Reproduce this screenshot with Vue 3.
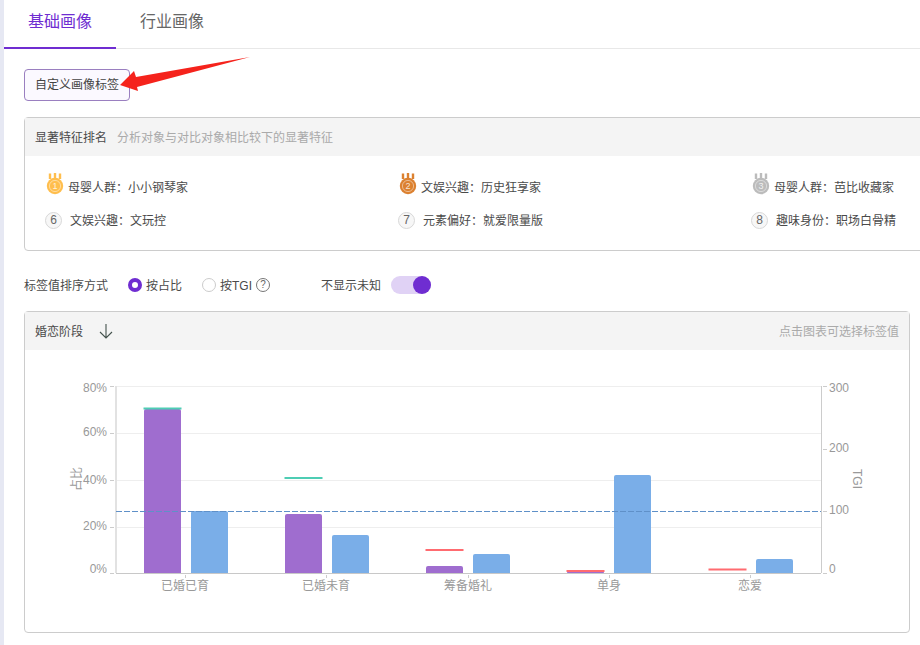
<template>
  <div class="page">
    <div class="tabs">
      <div class="tab active">基础画像</div>
      <div class="tab">行业画像</div>
    </div>

    <div class="content">
      <button class="custom-btn">自定义画像标签</button>

      <section class="card rank-card">
        <header class="card-head">
          <span class="head-title">显著特征排名</span>
          <span class="head-sub">分析对象与对比对象相比较下的显著特征</span>
        </header>
        <div class="rank-grid">
          <div v-for="item in rankItems" :key="item.rank" class="rank-item">
            <svg v-if="item.rank < 4" class="medal" width="18" height="23" viewBox="0 0 18 23">
              <path d="M4 7V1.5M9 7V1M14 7V1.5" :stroke="item.color" stroke-width="2.4" fill="none" />
              <circle cx="9" cy="14" r="8.2" :fill="item.color" />
              <circle cx="9" cy="14" r="5.6" fill="none" stroke="#ffffff" stroke-opacity="0.45" stroke-width="1" />
              <text x="9" y="17.4" text-anchor="middle" class="medal-num">{{ item.rank }}</text>
            </svg>
            <span v-else class="rank-num">{{ item.rank }}</span>
            <span class="rank-text">{{ item.text }}</span>
          </div>
        </div>
      </section>

      <div class="controls">
        <span class="ctl-label ctl-text">标签值排序方式</span>
        <span class="radio checked"></span>
        <span class="ctl-text">按占比</span>
        <span class="radio second"></span>
        <span class="ctl-text">按TGI</span>
        <span class="help">?</span>
        <span class="toggle-label ctl-text">不显示未知</span>
        <span class="toggle"><span class="knob"></span></span>
      </div>

      <section class="card chart-card">
        <header class="card-head">
          <span class="head-title">婚恋阶段</span>
          <svg class="sort-icon" width="14" height="16" viewBox="0 0 14 16">
            <path d="M7 1V15M1 9L7 15L13 9" fill="none" stroke="#44524d" stroke-width="1.1" />
          </svg>
          <span class="head-hint">点击图表可选择标签值</span>
        </header>
        <!-- viewBox uses page coordinates so chart numbers can be read off the screenshot -->
        <svg class="chart" width="884" height="282" viewBox="25 350 884 282">
          <line v-for="y in gridLines" :key="y" x1="116" x2="821" :y1="y" :y2="y" stroke="#eeeeee" />

          <line x1="116" x2="116" y1="386" y2="573" stroke="#e2e2e2" stroke-width="2" />
          <line x1="821.5" x2="821.5" y1="386" y2="573" stroke="#cccccc" />

          <g v-for="t in leftTicks" :key="t.label">
            <line x1="110" x2="114" :y1="t.tick" :y2="t.tick" stroke="#cccccc" />
            <text x="107" :y="t.y" text-anchor="end" class="axis-text">{{ t.label }}</text>
          </g>
          <g v-for="t in rightTicks" :key="t.label">
            <line x1="823" x2="827" :y1="t.tick" :y2="t.tick" stroke="#cccccc" />
            <text x="829" :y="t.y" class="axis-text">{{ t.label }}</text>
          </g>

          <text class="axis-title" transform="translate(81 479) rotate(-90)" text-anchor="middle">占比</text>
          <text class="axis-title" transform="translate(853 479) rotate(90)" text-anchor="middle">TGI</text>

          <g v-for="g in groups" :key="g.label">
            <path :d="barPath(g.x, g.purple)" fill="#9f6dcf" />
            <path :d="barPath(g.x + 47, g.blue)" fill="#7aaee8" />
            <rect :x="g.x - 0.5" :y="g.mark - 1" width="38" height="2" :fill="g.markColor" />
            <line :x1="g.cx + 0.5" :x2="g.cx + 0.5" y1="575" y2="578" stroke="#cccccc" />
            <text :x="g.cx" y="590" text-anchor="middle" class="x-text">{{ g.label }}</text>
          </g>

          <line x1="116" x2="821" y1="573.5" y2="573.5" stroke="#c8c8c8" />
          <line x1="116" x2="821" y1="511.5" y2="511.5" stroke="#5f90c8" stroke-dasharray="6 2" />
        </svg>
      </section>
    </div>

    <svg class="arrow" width="140" height="50" viewBox="115 50 140 50">
      <polygon points="250,57 136,77 134,71 120,85 138,91 137,87" fill="#f5231c" />
    </svg>
  </div>
</template>

<script setup>
const rankItems = [
  { rank: 1, text: "母婴人群：小小钢琴家", color: "#ffbe4d" },
  { rank: 2, text: "文娱兴趣：历史狂享家", color: "#dc8130" },
  { rank: 3, text: "母婴人群：芭比收藏家", color: "#bcbcbc" },
  { rank: 6, text: "文娱兴趣：文玩控" },
  { rank: 7, text: "元素偏好：就爱限量版" },
  { rank: 8, text: "趣味身份：职场白骨精" },
];

const gridLines = [386.5, 433.5, 480.5, 527.5];

const leftTicks = [
  { label: "80%", y: 392, tick: 386.5 },
  { label: "60%", y: 436, tick: 433.5 },
  { label: "40%", y: 484, tick: 480.5 },
  { label: "20%", y: 530, tick: 527.5 },
  { label: "0%", y: 573, tick: 573.5 },
];

const rightTicks = [
  { label: "300", y: 392, tick: 386.5 },
  { label: "200", y: 452, tick: 449.5 },
  { label: "100", y: 514, tick: 511.5 },
  { label: "0", y: 573, tick: 573.5 },
];

const teal = "#4ecdb4";
const red = "#ff6b70";

const groups = [
  { label: "已婚已育", x: 144, cx: 185, purple: 409, blue: 511, mark: 408.5, markColor: teal },
  { label: "已婚未育", x: 285, cx: 326, purple: 514, blue: 535, mark: 478, markColor: teal },
  { label: "筹备婚礼", x: 426, cx: 468, purple: 566, blue: 554, mark: 550, markColor: red },
  { label: "单身", x: 567, cx: 609, purple: 571, blue: 475, mark: 571, markColor: red },
  { label: "恋爱", x: 709, cx: 750, purple: 573, blue: 559, mark: 569.5, markColor: red },
];

// bar with slightly rounded top corners, standing on the x axis
function barPath(x, top) {
  const w = 37;
  const r = Math.min(2, 573 - top);
  return `M${x} 573V${top + r}Q${x} ${top} ${x + r} ${top}H${x + w - r}Q${x + w} ${top} ${x + w} ${top + r}V573Z`;
}
</script>

<style scoped>
.page {
  position: relative;
  width: 920px;
  height: 645px;
  box-sizing: border-box;
  border-left: 4px solid #e6e8f3;
  overflow: hidden;
  background: #fff;
  font-family: "Liberation Sans", "Noto Sans CJK SC", sans-serif;
  color: #555;
}

.tabs {
  display: flex;
  height: 49px;
  box-sizing: border-box;
  border-bottom: 1px solid #e8e8e8;
}

.tab {
  height: 49px;
  box-sizing: border-box;
  padding: 0 24px;
  line-height: 43px;
  font-size: 16px;
  color: #666;
}

.tab.active {
  color: #6f2dd1;
  border-bottom: 2px solid #6f2dd1;
}

.content {
  padding-left: 20px;
}

.custom-btn {
  display: block;
  width: 106px;
  height: 32px;
  margin-top: 20px;
  padding: 0 0 3px;
  box-sizing: border-box;
  border: 1px solid #9a7fc0;
  border-radius: 4px;
  background: #fbf9ff;
  font-family: inherit;
  font-size: 12px;
  color: #444;
}

.card {
  box-sizing: border-box;
  border: 1px solid #cccccc;
  border-radius: 4px;
  margin-top: 16px;
}

.rank-card {
  width: 1000px;
  height: 134px;
}

.card-head {
  display: flex;
  align-items: center;
  box-sizing: border-box;
  height: 38px;
  padding: 0 10px 2px;
  background: #f4f4f4;
  font-size: 12px;
}

.head-title {
  color: #4a4a4a;
}

.head-sub {
  margin-left: 10px;
  color: #aaa;
}

.rank-grid {
  display: grid;
  grid-template-columns: repeat(3, 353px);
  row-gap: 13px;
  padding: 21px 0 0 20px;
}

.rank-item {
  display: flex;
  align-items: center;
  height: 20px;
  font-size: 12px;
  color: #4a4a4a;
}

.rank-text {
  margin-top: -2px;
}

.medal {
  margin: -7px 4px 0 1px;
  flex: none;
}

.medal-num {
  font-size: 9px;
  fill: #fff;
  fill-opacity: 0.8;
}

.rank-num {
  flex: none;
  box-sizing: border-box;
  width: 17px;
  height: 17px;
  margin-right: 8px;
  border: 1px solid #d8d8d8;
  border-radius: 50%;
  background: #f7f7f7;
  text-align: center;
  line-height: 15px;
  font-size: 12px;
  color: #666;
}

.controls {
  display: flex;
  align-items: center;
  height: 20px;
  margin-top: 24px;
  font-size: 12px;
  color: #4a4a4a;
}

.ctl-text {
  margin-top: -2px;
}

.ctl-label {
  width: 84px;
  margin-right: 20px;
}

.radio {
  box-sizing: border-box;
  width: 14px;
  height: 14px;
  margin-right: 4px;
  border: 1px solid #ccc;
  border-radius: 50%;
}

.radio.checked {
  border: 4px solid #6f2dd1;
}

.radio.second {
  margin-left: 20px;
}

.help {
  box-sizing: border-box;
  width: 14px;
  height: 14px;
  margin-left: 4px;
  border: 1px solid #777;
  border-radius: 50%;
  text-align: center;
  line-height: 12px;
  font-size: 10px;
  color: #666;
}

.toggle-label {
  margin-left: 51px;
  margin-right: 10px;
}

.toggle {
  display: flex;
  justify-content: flex-end;
  width: 40px;
  height: 18px;
  border-radius: 9px;
  background: #e0d2f5;
}

.knob {
  width: 18px;
  height: 18px;
  border-radius: 50%;
  background: #6f2dd1;
}

.chart-card {
  width: 886px;
  height: 322px;
}

.sort-icon {
  margin-left: 16px;
  margin-top: 2px;
}

.head-hint {
  margin-left: auto;
  color: #aaa;
}

.chart {
  display: block;
}

.axis-text,
.x-text,
.axis-title {
  font-size: 12px;
  fill: #999;
}

.arrow {
  position: absolute;
  left: 111px;
  top: 50px;
}
</style>

<style>
html,
body {
  margin: 0;
  overflow: hidden;
}
</style>
